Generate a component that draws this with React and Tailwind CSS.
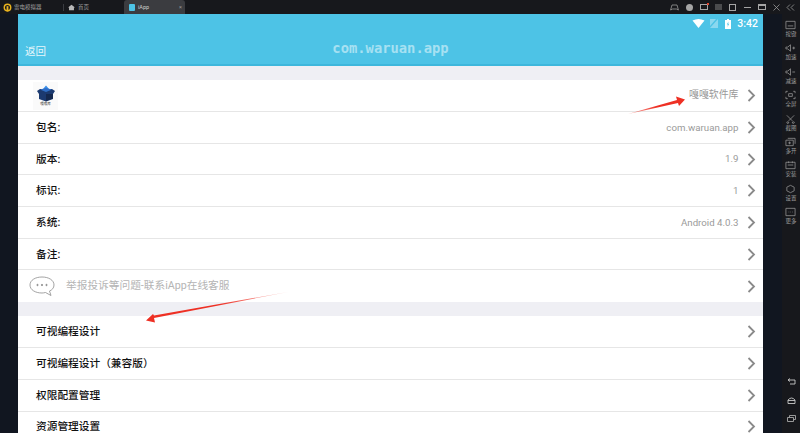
import React from 'react';

const CJK = "font-['Roboto','Noto_Sans_CJK_SC',sans-serif]";

const infoRows = [
  { label: '包名:', value: 'com.waruan.app' },
  { label: '版本:', value: '1.9' },
  { label: '标识:', value: '1' },
  { label: '系统:', value: 'Android 4.0.3' },
  { label: '备注:', value: '' },
];

const actionRows = ['可视编程设计', '可视编程设计\uFF08兼容版\uFF09', '权限配置管理', '资源管理设置'];

function Chevron() {
  return (
    <svg width="9" height="13" viewBox="0 0 9 13" fill="none" stroke="#8a8a8a" strokeWidth="1.8" className="ml-[8px] mr-[7.5px] shrink-0">
      <path d="M1.5 1 L7 6.5 L1.5 12" />
    </svg>
  );
}

function Row({ label, value }) {
  return (
    <div className="h-[31.7px] shrink-0 flex items-center bg-white border-b border-[#e6e6e6] pl-[18px]">
      <span className="text-[10.7px] font-medium text-[#111111] flex-1 pt-[1px]">{label}</span>
      <span className="text-[9.7px] text-[#9a9a9a] pt-[1px]">{value}</span>
      <Chevron />
    </div>
  );
}

function TabBar() {
  return (
    <div className="h-[14px] shrink-0 flex items-center bg-[#17181c] text-[5.5px] text-[#a0a0a0]">
      <svg width="9" height="9" viewBox="0 0 10 10" className="ml-[3px]">
        <circle cx="5" cy="5" r="3.6" fill="none" stroke="#e8b21e" strokeWidth="1.6" />
        <rect x="4" y="3.5" width="2" height="6" fill="#e8b21e" />
      </svg>
      <span className="ml-[2px] w-[49px]">雷电模拟器</span>
      <div className="w-px h-[7px] bg-[#3a3b40]" />
      <svg width="7" height="7" viewBox="0 0 10 10" className="ml-[4px]">
        <path d="M5 1 L10 5 H8.5 V9 H1.5 V5 H0 Z" fill="#b8b8b8" />
      </svg>
      <span className="ml-[3px] w-[46px]">首页</span>
      <div className="w-[61px] h-[14px] bg-[#3b3c40] rounded-t-[3px] flex items-center pl-[5px]">
        <div className="w-[6px] h-[7px] rounded-[1px] bg-[#4dc3e6]" />
        <span className="ml-[3px] text-[#cfcfcf] flex-1">iApp</span>
        <span className="mr-[3px] text-[#9a9a9a]">×</span>
      </div>
      <div className="ml-auto flex items-center gap-[5.5px] pr-[5px] text-[#9b9b9b]">
        <svg width="9" height="7" viewBox="0 0 9 7" fill="none" stroke="currentColor" strokeWidth="0.8">
          <path d="M2 1 H7 L8.4 6 L6.4 5 H2.6 L0.6 6 Z" />
        </svg>
        <div className="w-[9px] flex justify-center"><div className="w-[7px] h-[7px] rounded-full bg-[#a5a5a5]" /></div>
        <div className="w-[9px] flex justify-center">
          <div className="relative w-[8px] h-[6px] border border-[#a5a5a5]">
            <div className="absolute -top-[2px] -right-[2px] w-[2px] h-[2px] bg-[#e2432f]" />
          </div>
        </div>
        <svg width="9" height="6" viewBox="0 0 9 6" stroke="currentColor" strokeWidth="0.8">
          <path d="M1 1 H8 M1 3 H8 M1 5 H8" />
        </svg>
        <div className="w-[9px] flex justify-center"><div className="w-[7px] h-[7px] border border-[#a5a5a5]" /></div>
        <div className="w-[9px] flex justify-center"><div className="w-[7px] h-px bg-[#a5a5a5]" /></div>
        <div className="w-[9px] flex justify-center"><div className="w-[8px] h-[6px] border border-t-2 border-[#a5a5a5]" /></div>
        <svg width="9" height="7" viewBox="0 0 9 7" stroke="currentColor" strokeWidth="0.8">
          <path d="M1.5 0.5 L7.5 6.5 M7.5 0.5 L1.5 6.5" />
        </svg>
        <svg width="9" height="7" viewBox="0 0 9 7" fill="none" stroke="currentColor" strokeWidth="0.8">
          <path d="M4 0.5 L1 3.5 L4 6.5 M8 0.5 L5 3.5 L8 6.5" />
        </svg>
      </div>
    </div>
  );
}

const sideTools = [
  { label: '按键', d: 'M1 1 H11 V9 H1 Z M3 6 H9' },
  { label: '加速', d: 'M1 4 H3 L6 1.5 V8.5 L3 6 H1 Z M8 5 H11 M9.5 3.5 V6.5' },
  { label: '减速', d: 'M1 4 H3 L6 1.5 V8.5 L3 6 H1 Z M8 5 H11' },
  { label: '全屏', d: 'M1 3 V1 H3 M9 1 H11 V3 M11 7 V9 H9 M3 9 H1 V7 M4 3.5 H8 V6.5 H4 Z' },
  { label: '截图', d: 'M2 1 L8 7 M10 1 L4 7 M3 8 a1 1 0 1 0 .1 0 M9 8 a1 1 0 1 0 .1 0' },
  { label: '多开', d: 'M3 1 H11 V7 M1 3 H9 V9 H1 Z M5 4.5 V7.5 M3.5 6 H6.5' },
  { label: '安装', d: 'M1 2 H11 V9 H1 Z M3 5 H9 M4 1 V3 M8 1 V3' },
  { label: '设置', d: 'M6 1 L10 3 V7 L6 9 L2 7 V3 Z' },
  { label: '更多', d: 'M1 1 H11 V9 H1 Z M4 5 H4.6 M6 5 H6.6 M8 5 H8.6' },
];

function SideBar() {
  return (
    <div className="w-[18px] shrink-0 flex flex-col items-center bg-[#17181c] pt-[6px] text-[#9b9b9b]">
      <div className="flex flex-col items-center gap-[4px]">
        {sideTools.map((t) => (
          <div key={t.label} className="flex flex-col items-center h-[19.4px]">
            <svg width="11" height="10" viewBox="0 0 12 10" fill="none" stroke="currentColor" strokeWidth="0.8">
              <path d={t.d} />
            </svg>
            <span className="text-[5.5px] leading-[7px] mt-[1px] whitespace-nowrap">{t.label}</span>
          </div>
        ))}
      </div>
      <div className="mt-auto mb-[11px] flex flex-col items-center gap-[11.5px]">
        <svg width="9" height="7" viewBox="0 0 9 7" fill="none" stroke="#c8c8c8" strokeWidth="0.9">
          <path d="M1 2 H8 V6 H3 M3 0.5 L1 2 L3 3.5" />
        </svg>
        <svg width="9" height="7" viewBox="0 0 9 7" fill="none" stroke="#c8c8c8" strokeWidth="0.9">
          <path d="M1 3 Q4.5 -1 8 3 V6.5 H1 Z M1 3.5 H8" />
        </svg>
        <svg width="9" height="7" viewBox="0 0 9 7" fill="none" stroke="#a8a8a8" strokeWidth="0.9">
          <path d="M0.5 2.5 H6.5 V6.5 H0.5 Z M2.5 2.5 V0.5 H8.5 V4.5 H6.5" />
        </svg>
      </div>
    </div>
  );
}

export default function App() {
  return (
    <div className={`relative w-[800px] h-[433px] overflow-hidden flex flex-col bg-[#111620] ${CJK}`}>
      <TabBar />
      <div className="flex-1 min-h-0 flex">
        <div className="w-[18px] shrink-0" />
        <div className="w-[745px] shrink-0 flex flex-col overflow-hidden bg-[#efeff4]">
          {/* Android header */}
          <div className="h-[52px] shrink-0 relative flex items-end justify-center bg-[#4dc3e6] border-b-2 border-[#3eb7dc] pb-[6px]">
            <div className="absolute left-[7px] bottom-[4px] text-[10.5px] text-[#e6f6fb]">返回</div>
            <span className="font-['DejaVu_Sans_Mono',monospace] text-[13.8px] leading-[20px] text-white/50 font-bold">com.waruan.app</span>
            <div className="absolute right-[5px] top-[3px] flex items-center text-white">
              <svg width="13" height="9" viewBox="0 0 13 9"><path d="M0.5 1.5 Q6.5 -1.5 12.5 1.5 L6.5 9 Z" fill="#fff" /></svg>
              <svg width="8" height="9" viewBox="0 0 8 9" className="ml-[5px]"><path d="M0 9 L8 0 V9 Z M0 0 H6 L0 7 Z" fill="#ffffff" fillOpacity="0.35" /></svg>
              <svg width="6" height="10" viewBox="0 0 6 10" className="ml-[7px]"><path d="M2 0 H4 V1 H6 V10 H0 V1 H2 Z" fill="#fff" /><path d="M3.5 2.5 L1.8 5.6 H2.9 L2.5 8 L4.2 4.8 H3.1 Z" fill="#4dc3e6" /></svg>
              <span className="ml-[6px] mt-[1px] text-[10.5px] font-medium leading-[12px]">3:42</span>
            </div>
          </div>

          <div className="h-[14px] shrink-0" />

          {/* app name row */}
          <div className="h-[32px] shrink-0 flex items-center bg-white border-b border-[#e6e6e6] pl-[15px]">
            <div className="w-[25px] h-[28px] flex flex-col items-center justify-center bg-[#fafafa]">
              <svg width="20" height="17" viewBox="0 0 20 17">
                <path d="M10 0.5 L13 4 H7 Z" fill="#3a8ee8" />
                <path d="M1 6 L4 4 H16 L19 6 L17 9 V14 L10 16.5 L3 14 V9 Z" fill="#1c3a70" />
                <path d="M4 4.5 L10 3 L16 4.5 L10 7 Z" fill="#2f6fc8" />
                <path d="M10 9 V16 L17 13.5 V9 Z" fill="#15294f" />
              </svg>
              <span className="text-[3.5px] leading-[5px] text-[#333333]">嘎嘎库</span>
            </div>
            <span className="ml-auto text-[9.9px] text-[#9a9a9a]">嘎嘎软件库</span>
            <Chevron />
          </div>

          {infoRows.map((r) => <Row key={r.label} {...r} />)}

          {/* report row */}
          <div className="h-[32px] shrink-0 flex items-center bg-white pl-[11px]">
            <svg width="26" height="21" viewBox="0 0 26 21" fill="none" stroke="#8c8c8c" strokeWidth="0.8">
              <path d="M13 1 C19.5 1 25 4 25 9 C25 12 23 14 20.5 15 L22 19.5 L16.5 16.5 C15 16.8 14 17 13 17 C6.5 17 1 14 1 9 C1 4 6.5 1 13 1 Z" />
              <circle cx="8.5" cy="9" r="0.7" fill="#8c8c8c" />
              <circle cx="13" cy="9" r="0.7" fill="#8c8c8c" />
              <circle cx="17.5" cy="9" r="0.7" fill="#8c8c8c" />
            </svg>
            <span className="ml-[11px] text-[10.7px] text-[#b4b4b4] flex-1">举报投诉等问题-联系iApp在线客服</span>
            <Chevron />
          </div>

          <div className="h-[14px] shrink-0" />

          {actionRows.map((label) => <Row key={label} label={label} value="" />)}
        </div>
        <div className="w-[19px] shrink-0" />
        <SideBar />
      </div>

      {/* red annotation arrows drawn over the screenshot */}
      <svg width="800" height="433" viewBox="0 0 800 433" className="absolute left-0 top-0 pointer-events-none">
        <defs>
          <linearGradient id="fadeA" gradientUnits="userSpaceOnUse" x1="628" y1="114" x2="685" y2="99">
            <stop offset="0" stopColor="#f03a30" stopOpacity="0.4" />
            <stop offset="0.5" stopColor="#ee3024" />
          </linearGradient>
          <linearGradient id="fadeB" gradientUnits="userSpaceOnUse" x1="288" y1="292" x2="146" y2="321">
            <stop offset="0" stopColor="#f03a30" stopOpacity="0.35" />
            <stop offset="0.5" stopColor="#ee3024" />
          </linearGradient>
        </defs>
        <path d="M628 114 L677 100 L676 96.5 L685 99.5 L679 106 L678 103 Z" fill="url(#fadeA)" />
        <path d="M288 292 L154 318 L155 322.5 L146 320.5 L153 314 L154 315.5 Z" fill="url(#fadeB)" />
      </svg>
    </div>
  );
}
